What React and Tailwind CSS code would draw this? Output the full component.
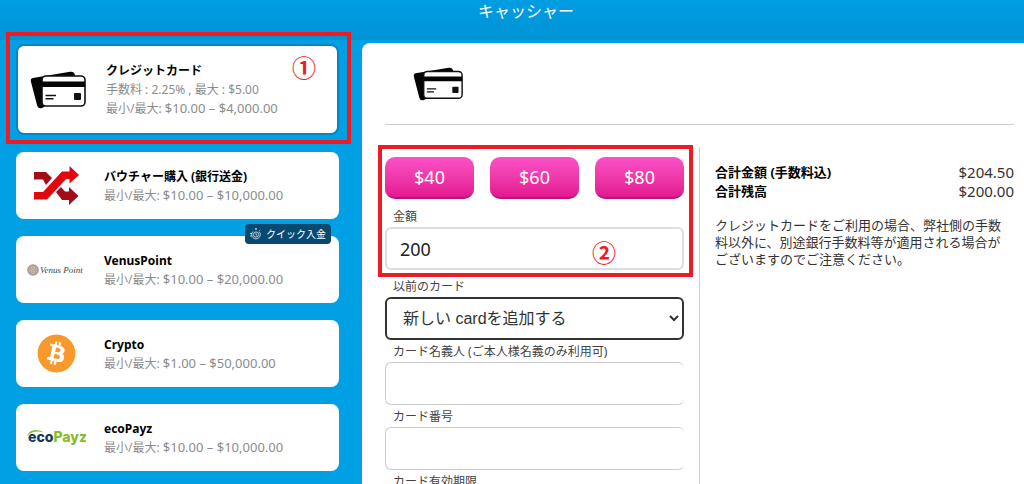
import React, { useState } from 'react';
import { FaBitcoin } from 'react-icons/fa';

function CreditCardIcon({ className }) {
  return (
    <svg viewBox="0 0 56 38" className={className} aria-hidden="true">
      <path
        d="M3 7 L40 .8 Q44 .2 45 4 L46 9 L14 36 L12 37 Q8 38 7 34 L1 11 Q0 7.600 3 7Z"
        fill="#050505"
      />
      <rect x="12" y="5" width="43" height="30" rx="4" fill="#fff" stroke="#111" strokeWidth="1.600" />
      <path d="M12 10.500h43v5.500H12z" fill="#050505" />
      <path d="M15.500 24.500h10.500M15.500 27.800h8" stroke="#111" strokeWidth="1.500" />
      <rect x="44" y="22" width="7" height="7" rx="1" fill="#111" />
    </svg>
  );
}

function ShuffleIcon() {
  return (
    <svg viewBox="0 0 45 40" className="h-10 w-[45px]" aria-hidden="true">
      <path d="M0 6h12l6 6-6 7-3-5.500H0z" fill="#a50c17" />
      <path d="M22 26l5-5 4 4.500h4V21l9.500 9-9.500 9v-5h-7z" fill="#a50c17" />
      <path d="M0 26h9L28 5.500h7.500V0L45 9l-9.500 8.500V13H32L13 33.500H0z" fill="#e2060f" />
    </svg>
  );
}

function VenusPointLogo() {
  return (
    <svg viewBox="0 0 58 16" className="h-4 w-[58px]" aria-hidden="true">
      <circle cx="6" cy="8" r="5.800" fill="#a8988f" />
      <circle cx="6" cy="8" r="4" fill="none" stroke="#c9bdb6" strokeWidth=".7" />
      <path d="M6 4.500v7M4.500 5.500Q3.500 8 4.500 10.500M7.500 5.500Q8.500 8 7.500 10.500" stroke="#e0d8d3" strokeWidth=".7" fill="none" />
      <text x="13" y="11" fontSize="9" fontStyle="italic" fontFamily="Liberation Serif, serif" fill="#444">
        Venus Point
      </text>
    </svg>
  );
}

function EcoPayzLogo() {
  return (
    <svg viewBox="0 0 60 20" className="h-5 w-[60px]" aria-hidden="true">
      <path d="M1 8Q3 2 10 2Q15 2 18 4.500Q11 2.500 7 4.200Q3 5.500 1 8Z" fill="#86bd2c" />
      <text x="2" y="14" fontSize="14" fontWeight="800" fontFamily="Inter, sans-serif" fill="#17375e">
        eco<tspan fill="#86bd2c">Payz</tspan>
      </text>
    </svg>
  );
}

function StopwatchIcon() {
  return (
    <svg viewBox="0 0 12 12" className="size-3" fill="none" stroke="#c8dce8" strokeWidth=".9" aria-hidden="true">
      <path d="M5 .7h2M6 .7v1.500M9.300 2.700l.8-.8M3 3.500A4.300 4.300 0 1 0 9 3.500" />
      <circle cx="6" cy="6.500" r="2.600" />
      <path d="M6 4.800v1.900l1.200.7M0 5.500h2M0 8h1.800" />
    </svg>
  );
}

const methods = [
  {
    id: 'card',
    name: 'クレジットカード',
    fee: '手数料 : 2.25% , 最大 : $5.00',
    limits: '$10.00 – $4,000.00',
    icon: <CreditCardIcon className="h-[38px] w-14" />,
  },
  {
    id: 'voucher',
    name: 'バウチャー購入 (銀行送金)',
    limits: '$10.00 – $10,000.00',
    icon: <ShuffleIcon />,
  },
  {
    id: 'venus',
    name: 'VenusPoint',
    limits: '$10.00 – $20,000.00',
    icon: <VenusPointLogo />,
    badge: 'クイック入金',
  },
  {
    id: 'crypto',
    name: 'Crypto',
    limits: '$1.00 – $50,000.00',
    icon: <FaBitcoin className="size-[39px] text-[#f8992c]" />,
  },
  {
    id: 'ecopayz',
    name: 'ecoPayz',
    limits: '$10.00 – $10,000.00',
    icon: <EcoPayzLogo />,
  },
];

function MethodCard({ method, selected, onSelect }) {
  return (
    <button
      type="button"
      onClick={onSelect}
      className={`relative flex w-full items-center rounded-lg bg-white text-left ${
        selected ? 'h-[91px] border-2 border-[#0684c4]' : 'h-[67px]'
      }`}
    >
      <span className="flex w-20 shrink-0 justify-center">{method.icon}</span>
      <span className="ml-2 flex flex-col text-xs leading-[19px] text-[#8c8c8c]">
        <span className="font-bold text-black">{method.name}</span>
        {method.fee && <span>{method.fee}</span>}
        <span>
          最小/最大: <span className="text-[13px]">{method.limits}</span>
        </span>
      </span>
      {method.badge && (
        <span className="absolute -top-3 right-2 flex h-5 items-center gap-1 rounded bg-[#07496f] px-[5px] text-[10px] text-white">
          <StopwatchIcon />
          {method.badge}
        </span>
      )}
    </button>
  );
}

function Field({ id, label, children }) {
  return (
    <div>
      <label htmlFor={id} className="block pt-0.5 pl-2 text-xs leading-5 text-[#444]">{label}</label>
      {children}
    </div>
  );
}

export default function App() {
  const [selected, setSelected] = useState('card');
  const [amount, setAmount] = useState('200');

  return (
    <div className="flex h-screen flex-col overflow-hidden bg-[#00a0e4] font-['Noto_Sans','Noto_Sans_CJK_JP',sans-serif]">
      <header className="h-10 shrink-0 bg-linear-to-b from-[#009de2] to-[#0094d6] pl-7 text-center">
        <h1 className="text-base leading-[22px] text-white">キャッシャー</h1>
      </header>

      <div className="flex min-h-0 flex-1">
        <nav className="relative w-[362px] shrink-0 pt-1 pr-[23px] pl-4">
          <div className="flex flex-col gap-[17px]">
            {methods.map((method) => (
              <MethodCard
                key={method.id}
                method={method}
                selected={selected === method.id}
                onSelect={() => setSelected(method.id)}
              />
            ))}
          </div>
          <div className="pointer-events-none absolute -top-2 right-[11px] left-1.5 h-[112px] border-4 border-[#ed1c24]">
            <span className="absolute top-5 right-[31px] text-2xl leading-6 font-bold text-[#ed1c24]">①</span>
          </div>
        </nav>

        <main className="mt-[3px] min-w-0 flex-1 rounded-tl-lg bg-white pr-[10px] pl-[23px]">
          <div className="flex h-[82px] items-center border-b border-[#ccc] pl-7">
            <CreditCardIcon className="h-[34px] w-[50px]" />
          </div>

          <div className="mt-[22px] flex">
            <form className="relative w-[299px] shrink-0 pt-2.5">
              <div className="mb-1.5 grid grid-cols-3 gap-4">
                {[40, 60, 80].map((value) => (
                  <button
                    key={value}
                    type="button"
                    onClick={() => setAmount(String(value))}
                    className="h-[42px] rounded-[10px] border-b-2 border-[#b8147c] bg-linear-to-b from-[#fb50c8] to-[#e3178f] text-lg text-white"
                  >
                    ${value}
                  </button>
                ))}
              </div>
              <div className="mb-[5px]">
                <Field id="amount" label="金額">
                  <input
                    id="amount"
                    value={amount}
                    onChange={(e) => setAmount(e.target.value)}
                    className="block h-[43px] w-full rounded-md border-2 border-[#ddd] px-[13px] text-lg text-[#222]"
                  />
                </Field>
              </div>
              <Field id="previous" label="以前のカード">
                <select
                  id="previous"
                  className="block h-[43px] w-full rounded-md border-2 border-[#333] bg-white pl-3 font-['Liberation_Sans','Noto_Sans_CJK_JP',sans-serif] text-base text-[#333]"
                >
                  <option>新しい cardを追加する</option>
                </select>
              </Field>
              <Field id="holder" label="カード名義人 (ご本人様名義のみ利用可)">
                <input id="holder" className="block h-[43px] w-full rounded-md border border-r-0 border-[#ccc] px-[13px]" />
              </Field>
              <Field id="number" label="カード番号">
                <input id="number" className="block h-[43px] w-full rounded-md border border-r-0 border-[#ccc] px-[13px]" />
              </Field>
              <Field id="expiry" label="カード有効期限">
                <input id="expiry" className="block h-[43px] w-full rounded-md border border-r-0 border-[#ccc] px-[13px]" />
              </Field>
              <div className="pointer-events-none absolute -top-0.5 -right-[9px] -left-[7px] h-[132px] border-4 border-[#ed1c24]">
                <span className="absolute right-[73px] bottom-2 text-2xl leading-6 font-bold text-[#ed1c24]">②</span>
              </div>
            </form>

            <section className="ml-[15px] min-w-0 flex-1 border-l border-[#ccc] pt-4 pl-[15px]">
              <dl className="text-[15px] leading-[19px] text-[#333]">
                <div className="flex justify-between">
                  <dt className="text-[13px] font-bold text-black">合計金額 (手数料込)</dt>
                  <dd>$204.50</dd>
                </div>
                <div className="flex justify-between">
                  <dt className="text-[13px] font-bold text-black">合計残高</dt>
                  <dd>$200.00</dd>
                </div>
              </dl>
              <p className="mt-4 pr-2 text-[13px] leading-[17px] text-[#333]">
                クレジットカードをご利用の場合、弊社側の手数料以外に、別途銀行手数料等が適用される場合がございますのでご注意ください。
              </p>
            </section>
          </div>
        </main>
      </div>
    </div>
  );
}
